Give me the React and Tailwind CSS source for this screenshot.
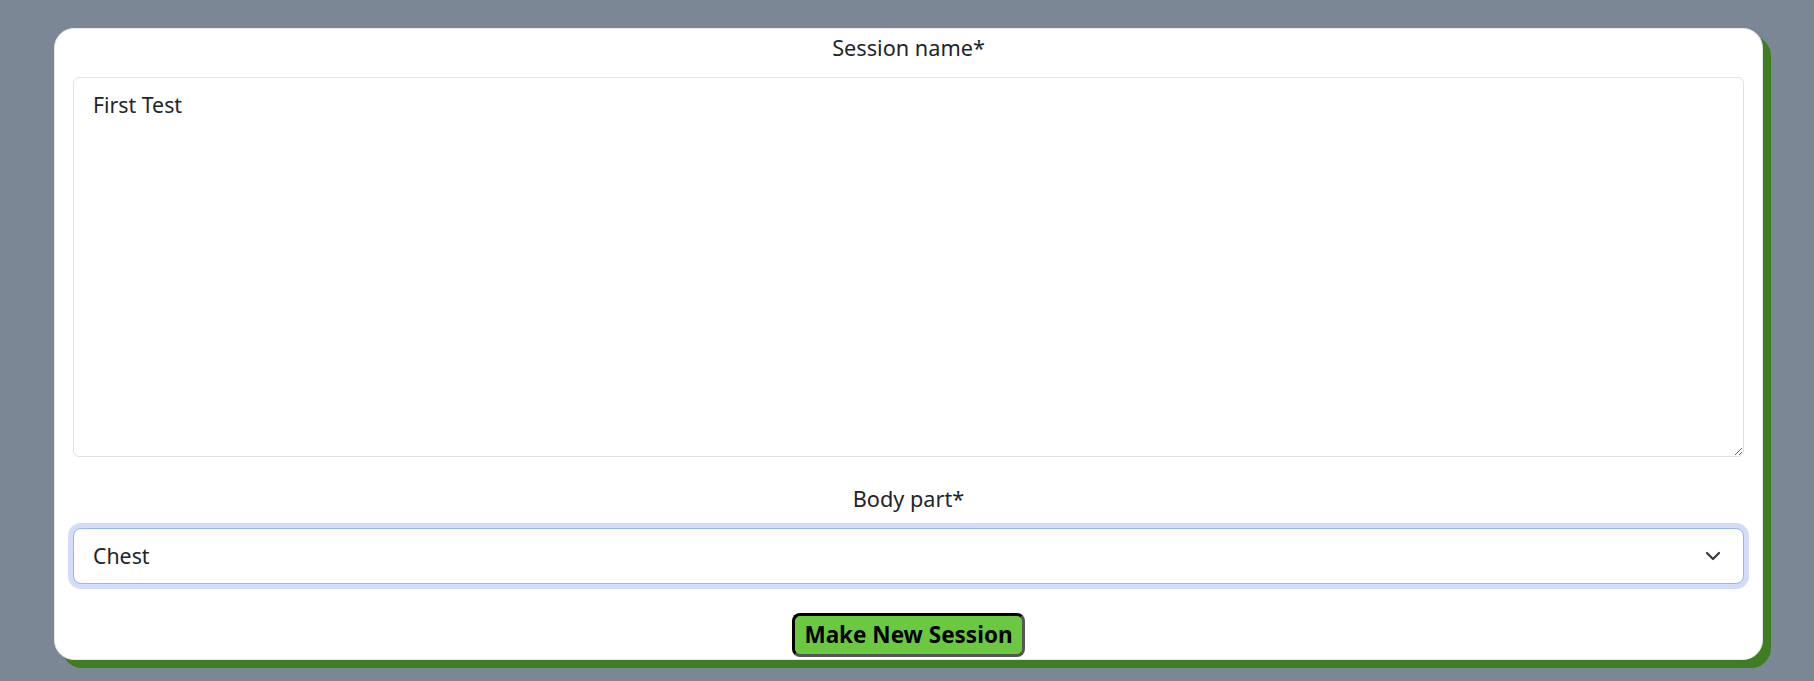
import React, { useState } from 'react';
import { ChevronDown } from 'lucide-react';

const App = () => {
    const [sessionName, setSessionName] = useState('First Test');
    const [bodyPart, setBodyPart] = useState('Chest');

    return (
        <div
            className="min-h-screen bg-[#7b8795] pt-[28px] pl-[54px] pr-[51px]"
            style={{ fontFamily: '"Noto Sans", "Open Sans", sans-serif' }}
        >
            <form
                onSubmit={(e) => e.preventDefault()}
                className="flex flex-col items-center rounded-[20px] bg-white border border-gray-200 shadow-[8px_8px_0_#407d22] px-[18px] pt-[4px] pb-[2px] text-[#212529]"
            >
                <label htmlFor="sessionName" className="text-[21.7px] leading-[30px] mb-[14px]">
                    Session name*
                </label>
                <textarea
                    id="sessionName"
                    value={sessionName}
                    onChange={(e) => setSessionName(e.target.value)}
                    className="w-full h-[380px] border border-[#dee2e6] rounded-[6px] px-[19px] pt-[12px] text-[21.3px] leading-[30px] text-[#212529] outline-none"
                />

                <label htmlFor="bodyPart" className="text-[21.7px] leading-[30px] mt-[27px] mb-[14px]">
                    Body part*
                </label>
                <div className="relative w-full">
                    <select
                        id="bodyPart"
                        value={bodyPart}
                        onChange={(e) => setBodyPart(e.target.value)}
                        className="w-full h-[56px] appearance-none bg-white border border-[#98b4f4] rounded-[8px] px-[19px] text-[21.3px] text-[#212529] outline-none shadow-[0_0_0_5px_#d3dcfa]"
                    >
                        <option>Chest</option>
                        <option>Back</option>
                        <option>Legs</option>
                        <option>Shoulders</option>
                        <option>Arms</option>
                    </select>
                    <ChevronDown
                        size={24}
                        strokeWidth={2.2}
                        className="pointer-events-none absolute right-[19px] top-1/2 -translate-y-1/2 text-[#343a40]"
                    />
                </div>

                <button
                    type="submit"
                    className="mt-[29px] h-[44px] px-[9px] rounded-[8px] bg-[#6bc941] border-[3px] border-black border-r-[#555] border-b-[#555] text-[22.5px] font-bold text-black leading-none"
                >
                    Make New Session
                </button>
            </form>
        </div>
    );
};

export default App;
